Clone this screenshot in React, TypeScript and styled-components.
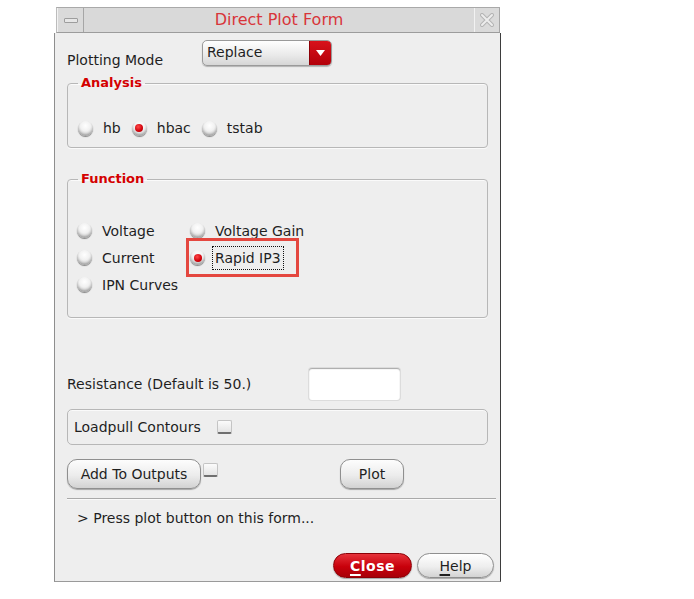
import styled, { createGlobalStyle } from "styled-components";

const GlobalStyle = createGlobalStyle`
  html, body {
    margin: 0;
    padding: 0;
    background: #ffffff;
  }
  body {
    font-family: "DejaVu Sans", "Liberation Sans", sans-serif;
    font-size: 14px;
    color: #1f1f1f;
  }
`;

const Page = styled.div`
  padding: 7px 0 0 54px;
`;

const Window = styled.div`
  width: 447px;
  display: flex;
  flex-direction: column;
`;

const TitleBar = styled.div`
  box-sizing: border-box;
  height: 26px;
  margin: 0 1px 0 2px;
  display: flex;
  align-items: stretch;
  background: #d9d9d9;
  border-top: 1px solid #a9a9a9;
  border-left: 1px solid #bcbcbc;
  border-bottom: 1px solid #9c9c9c;
`;

const TitleButton = styled.div<{ $width: number }>`
  width: ${(p) => p.$width}px;
  display: flex;
  align-items: center;
  justify-content: center;
  border-left: 1px solid #f2f2f2;
  border-right: 1px solid #a6a6a6;
  background: #dadada;
`;

const MinBar = styled.div`
  width: 12px;
  height: 3px;
  background: #e6e6e6;
  border: 1px solid #9d9d9d;
  border-radius: 1px;
`;

const Title = styled.div`
  flex: 1;
  text-align: center;
  font-size: 16px;
  line-height: 24px;
  color: #d8353a;
`;

const Body = styled.div`
  box-sizing: border-box;
  height: 549px;
  background: #eeeeee;
  border-left: 1px solid #8e8e8e;
  border-right: 1px solid #3d3d3d;
  border-bottom: 1px solid #9a9a9a;
  padding: 7px 12px 3px 12px;
  display: flex;
  flex-direction: column;
`;

const ModeRow = styled.div`
  display: flex;
  align-items: flex-start;
  height: 26px;
`;

const FieldLabel = styled.div<{ $width: number }>`
  width: ${(p) => p.$width}px;
  flex-shrink: 0;
  line-height: 18px;
`;

const ModeLabel = styled(FieldLabel)`
  padding-top: 11px;
`;

const Select = styled.div`
  box-sizing: border-box;
  width: 130px;
  height: 26px;
  display: flex;
  border: 1px solid #9a9a9a;
  border-radius: 5px;
  overflow: hidden;
  background: linear-gradient(#ffffff, #e9e9e9 60%, #d6d6d6);
  box-shadow: 0 1px 1px rgba(0, 0, 0, 0.25);
`;

const SelectText = styled.div`
  flex: 1;
  padding-left: 4px;
  line-height: 23px;
  font-size: 14px;
`;

const SelectArrow = styled.div`
  width: 21px;
  display: flex;
  align-items: center;
  justify-content: center;
  background: linear-gradient(#d8121b, #b3000a);
  border-left: 1px solid #8d0006;
`;

const Group = styled.fieldset<{ $top: number; $padTop: number; $padBottom: number }>`
  margin: ${(p) => p.$top}px 0 0 0;
  padding: ${(p) => p.$padTop}px 10px ${(p) => p.$padBottom}px 10px;
  border: 1px solid #b7b7b7;
  border-radius: 4px;
  box-shadow: 0 1px 0 #fafafa, inset 0 1px 0 #fafafa;
  min-width: 0;
`;

const Legend = styled.legend`
  padding: 0 3px;
  font-weight: bold;
  font-size: 13px;
  line-height: 16px;
  color: #d40000;
`;

const RadioRow = styled.div`
  display: flex;
  align-items: center;
  gap: 8px;
  height: 18px;
`;

const RadioGrid = styled.div`
  display: grid;
  grid-template-columns: 113px auto;
  grid-auto-rows: 27px;
  margin-left: -1px;
`;

const RadioItem = styled.div`
  position: relative;
  display: flex;
  align-items: center;
  gap: 7px;
`;

const RadioDot = styled.span<{ $on?: boolean }>`
  box-sizing: border-box;
  width: 15px;
  height: 15px;
  border-radius: 50%;
  flex-shrink: 0;
  display: flex;
  align-items: center;
  justify-content: center;
  background: radial-gradient(circle at 50% 32%, #ffffff 0%, #f1f1f1 40%, #b0b0b0 100%);
  box-shadow: 0 1px 1px rgba(0, 0, 0, 0.45), inset 0 -2px 2px rgba(0, 0, 0, 0.18);

  &::after {
    content: "";
    display: ${(p) => (p.$on ? "block" : "none")};
    width: 8px;
    height: 8px;
    border-radius: 50%;
    background: radial-gradient(circle at 40% 35%, #ff4a4a, #d0000a 60%, #a00000);
  }
`;

const RadioText = styled.span<{ $focus?: boolean }>`
  padding: 2px 2px;
  line-height: 18px;
  border: 1px dotted ${(p) => (p.$focus ? "#111" : "transparent")};
`;

const Highlight = styled.div`
  position: absolute;
  left: -4px;
  top: -6px;
  width: 113px;
  height: 39px;
  box-sizing: border-box;
  border: 3px solid #e4473f;
  pointer-events: none;
`;

const ResistanceRow = styled.div`
  display: flex;
  align-items: center;
  margin-top: 50px;
`;

const TextInput = styled.div`
  box-sizing: border-box;
  width: 91px;
  height: 32px;
  background: #ffffff;
  border-radius: 3px;
  box-shadow: inset 0 1px 1px rgba(0, 0, 0, 0.35), 0 0 0 1px #dcdcdc;
`;

const Panel = styled.div`
  box-sizing: border-box;
  margin-top: 9px;
  height: 36px;
  display: flex;
  align-items: center;
  gap: 16px;
  padding-left: 6px;
  border: 1px solid #b7b7b7;
  border-radius: 5px;
  box-shadow: inset 0 1px 0 #fafafa;
`;

const Check = styled.span`
  box-sizing: border-box;
  width: 15px;
  height: 14px;
  flex-shrink: 0;
  background: linear-gradient(#fbfbfb, #e4e4e4);
  border: 1px solid #c4c4c4;
  border-bottom: 2px solid #6f6f6f;
  border-radius: 2px;
`;

const ActionRow = styled.div`
  display: flex;
  align-items: flex-start;
  margin-top: 14px;
  height: 30px;
`;

const Button = styled.button<{ $width: number }>`
  box-sizing: border-box;
  width: ${(p) => p.$width}px;
  height: 30px;
  padding: 0;
  font-family: inherit;
  font-size: 14px;
  color: #1f1f1f;
  border: 1px solid #8f8f8f;
  border-radius: 10px;
  background: linear-gradient(#fdfdfd, #ececec 55%, #d2d2d2);
  box-shadow: 0 1px 1px rgba(0, 0, 0, 0.3);
`;

const SmallCheck = styled(Check)`
  margin: 4px 0 0 2px;
`;

const PlotButton = styled(Button)`
  margin-left: 122px;
`;

const Separator = styled.div`
  margin: 9px -8px 0 0;
  height: 1px;
  background: #a9a9a9;
  box-shadow: 0 1px 0 #fafafa;
`;

const Message = styled.div`
  margin-top: 10px;
  padding-left: 10px;
  line-height: 18px;
`;

const Footer = styled.div`
  margin: auto -6px 0 0;
  display: flex;
  justify-content: flex-end;
  gap: 5px;
`;

const DialogButton = styled.button<{ $primary?: boolean; $width: number }>`
  box-sizing: border-box;
  width: ${(p) => p.$width}px;
  height: 25px;
  padding: 0;
  font-family: inherit;
  font-size: 14px;
  font-weight: ${(p) => (p.$primary ? "bold" : "normal")};
  letter-spacing: ${(p) => (p.$primary ? "0.5px" : "0")};
  color: ${(p) => (p.$primary ? "#ffffff" : "#1f1f1f")};
  border: 1px solid ${(p) => (p.$primary ? "#8c0006" : "#8f8f8f")};
  border-radius: 13px;
  background: ${(p) =>
    p.$primary
      ? "linear-gradient(#e5323a, #c8000b 55%, #a80008)"
      : "linear-gradient(#ffffff, #eeeeee 55%, #d3d3d3)"};
  box-shadow: 0 1px 1px rgba(0, 0, 0, 0.3);

  u {
    text-decoration-thickness: 2px;
    text-underline-offset: 3px;
  }
`;

const App = () => {
  return (
    <Page>
      <GlobalStyle />
      <Window>
        <TitleBar>
          <TitleButton $width={25}>
            <MinBar />
          </TitleButton>
          <Title>Direct Plot Form</Title>
          <TitleButton $width={24}>
            <svg width="14" height="14" viewBox="0 0 14 14">
              <path d="M2 2 L12 12 M12 2 L2 12" stroke="#b4b4b4" strokeWidth="4" strokeLinecap="round" />
              <path d="M2 2 L12 12 M12 2 L2 12" stroke="#ededed" strokeWidth="2" strokeLinecap="round" />
            </svg>
          </TitleButton>
        </TitleBar>
        <Body>
          <ModeRow>
            <ModeLabel $width={135}>Plotting Mode</ModeLabel>
            <Select>
              <SelectText>Replace</SelectText>
              <SelectArrow>
                <svg width="9" height="6" viewBox="0 0 9 6">
                  <path d="M0 0 H9 L4.5 6 Z" fill="#ffffff" />
                </svg>
              </SelectArrow>
            </Select>
          </ModeRow>

          <Group $top={9} $padTop={28} $padBottom={10}>
            <Legend>Analysis</Legend>
            <RadioRow>
              <RadioItem>
                <RadioDot />
                <RadioText>hb</RadioText>
              </RadioItem>
              <RadioItem>
                <RadioDot $on />
                <RadioText>hbac</RadioText>
              </RadioItem>
              <RadioItem>
                <RadioDot />
                <RadioText>tstab</RadioText>
              </RadioItem>
            </RadioRow>
          </Group>

          <Group $top={23} $padTop={30} $padBottom={19}>
            <Legend>Function</Legend>
            <RadioGrid>
              <RadioItem>
                <RadioDot />
                <RadioText>Voltage</RadioText>
              </RadioItem>
              <RadioItem>
                <RadioDot />
                <RadioText>Voltage Gain</RadioText>
              </RadioItem>
              <RadioItem>
                <RadioDot />
                <RadioText>Current</RadioText>
              </RadioItem>
              <RadioItem>
                <RadioDot $on />
                <RadioText $focus>Rapid IP3</RadioText>
                <Highlight />
              </RadioItem>
              <RadioItem>
                <RadioDot />
                <RadioText>IPN Curves</RadioText>
              </RadioItem>
            </RadioGrid>
          </Group>

          <ResistanceRow>
            <FieldLabel $width={242}>Resistance (Default is 50.)</FieldLabel>
            <TextInput />
          </ResistanceRow>

          <Panel>
            <span>Loadpull Contours</span>
            <Check />
          </Panel>

          <ActionRow>
            <Button $width={134}>Add To Outputs</Button>
            <SmallCheck />
            <PlotButton $width={64}>Plot</PlotButton>
          </ActionRow>

          <Separator />
          <Message>&gt; Press plot button on this form...</Message>

          <Footer>
            <DialogButton $primary $width={79}>
              <u>C</u>lose
            </DialogButton>
            <DialogButton $width={77}>
              <u>H</u>elp
            </DialogButton>
          </Footer>
        </Body>
      </Window>
    </Page>
  );
};

export default App;
